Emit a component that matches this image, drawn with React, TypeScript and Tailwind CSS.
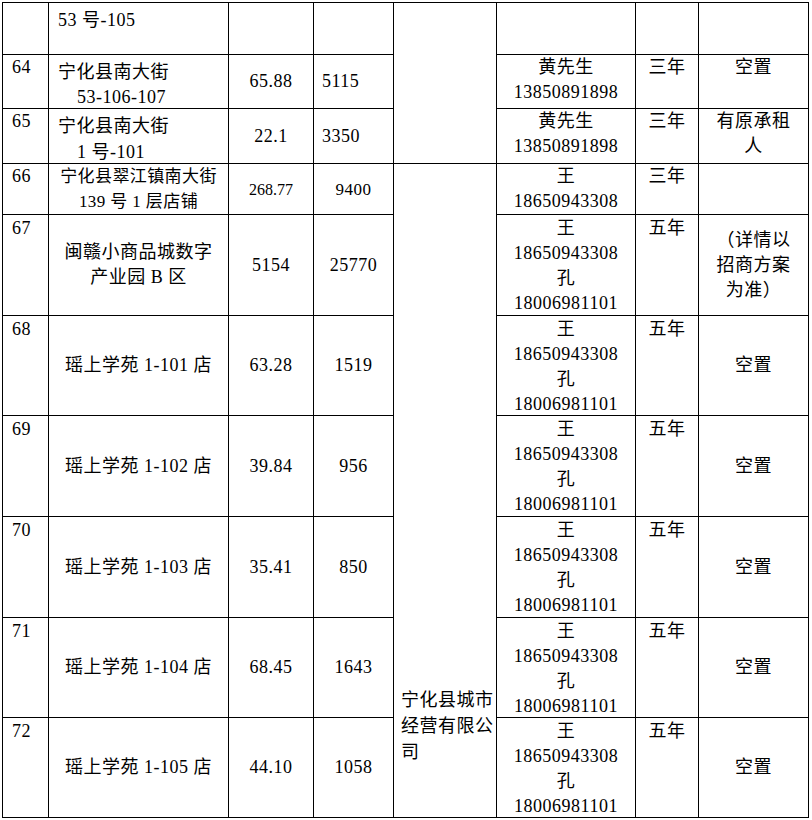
import type { ReactNode } from "react"

type Shop = { no: string; name: string; area: string; rent: string }

const shops: Shop[] = [
  { no: "68", name: "瑶上学苑 1-101 店", area: "63.28", rent: "1519" },
  { no: "69", name: "瑶上学苑 1-102 店", area: "39.84", rent: "956" },
  { no: "70", name: "瑶上学苑 1-103 店", area: "35.41", rent: "850" },
  { no: "71", name: "瑶上学苑 1-104 店", area: "68.45", rent: "1643" },
  { no: "72", name: "瑶上学苑 1-105 店", area: "44.10", rent: "1058" },
]

function Cell({ className = "", children }: { className?: string; children?: ReactNode }) {
  return <div className={`border-r border-b border-black ${className}`}>{children}</div>
}

function Center({ children, className = "" }: { children?: ReactNode; className?: string }) {
  return <Cell className={`flex flex-col justify-center items-center text-center ${className}`}>{children}</Cell>
}

function Contact() {
  return (
    <Cell className="pt-[1px] text-center">
      <div>王</div>
      <div>18650943308</div>
      <div>孔</div>
      <div>18006981101</div>
    </Cell>
  )
}

export default function App() {
  return (
    <div className="min-h-screen bg-white pl-[2px] pt-[2px] text-black">
      <div className="grid w-fit grid-cols-[46px_180px_85px_80px_103px_139px_63px_110px] grid-rows-[52px_54px_55px_51px_101px_100px_101px_101px_100px_100px] border-l border-t border-black font-['Liberation_Serif','Noto_Sans_CJK_SC',serif] text-[18px] leading-[25px] tracking-[0.5px]">
        {/* 续上页 */}
        <Cell />
        <Cell className="pl-[9px] pt-[5px]">53 号-105</Cell>
        <Cell />
        <Cell />
        <Cell className="row-span-3" />
        <Cell />
        <Cell />
        <Cell />

        {/* 64 */}
        <Cell className="pl-[9px]">64</Cell>
        <Cell className="pl-[9px] pt-[5px]">
          <div>宁化县南大街</div>
          <div className="pl-[19px]">53-106-107</div>
        </Cell>
        <Center>65.88</Center>
        <Cell className="flex flex-col justify-center pl-[8px]">5115</Cell>
        <Cell className="text-center">
          <div>黄先生</div>
          <div>13850891898</div>
        </Cell>
        <Cell className="text-center">三年</Cell>
        <Cell className="text-center">空置</Cell>

        {/* 65 */}
        <Cell className="pl-[9px]">65</Cell>
        <Cell className="pl-[9px] pt-[4px] leading-[26px]">
          <div>宁化县南大街</div>
          <div className="pl-[19px]">1 号-101</div>
        </Cell>
        <Center>22.1</Center>
        <Cell className="flex flex-col justify-center pl-[8px]">3350</Cell>
        <Cell className="text-center">
          <div>黄先生</div>
          <div>13850891898</div>
        </Cell>
        <Cell className="text-center">三年</Cell>
        <Cell className="text-center">
          <div>有原承租</div>
          <div>人</div>
        </Cell>

        {/* 66 */}
        <Cell className="pl-[9px]">66</Cell>
        <Cell className="text-center text-[17px] tracking-[0.4px]">
          <div>宁化县翠江镇南大街</div>
          <div>139 号 1 层店铺</div>
        </Cell>
        <Center className="text-[16px] tracking-normal">268.77</Center>
        <Center className="text-[17px]">9400</Center>
        <Cell className="row-span-7 flex flex-col justify-end pb-[52px] pl-[7px] leading-[26px]">
          <div>宁化县城市</div>
          <div>经营有限公</div>
          <div>司</div>
        </Cell>
        <Cell className="text-center">
          <div>王</div>
          <div>18650943308</div>
        </Cell>
        <Cell className="text-center">三年</Cell>
        <Cell />

        {/* 67 */}
        <Cell className="pl-[9px] pt-[1px]">67</Cell>
        <Center>
          <div>闽赣小商品城数字</div>
          <div>产业园 B 区</div>
        </Center>
        <Center>5154</Center>
        <Center>25770</Center>
        <Contact />
        <Cell className="pt-[1px] text-center">五年</Cell>
        <Center>
          <div>（详情以</div>
          <div>招商方案</div>
          <div>为准）</div>
        </Center>

        {shops.map((shop) => (
          <div key={shop.no} className="contents">
            <Cell className="pl-[9px] pt-[1px]">{shop.no}</Cell>
            <Center>{shop.name}</Center>
            <Center>{shop.area}</Center>
            <Center>{shop.rent}</Center>
            <Contact />
            <Cell className="pt-[1px] text-center">五年</Cell>
            <Center>空置</Center>
          </div>
        ))}
      </div>
    </div>
  )
}
